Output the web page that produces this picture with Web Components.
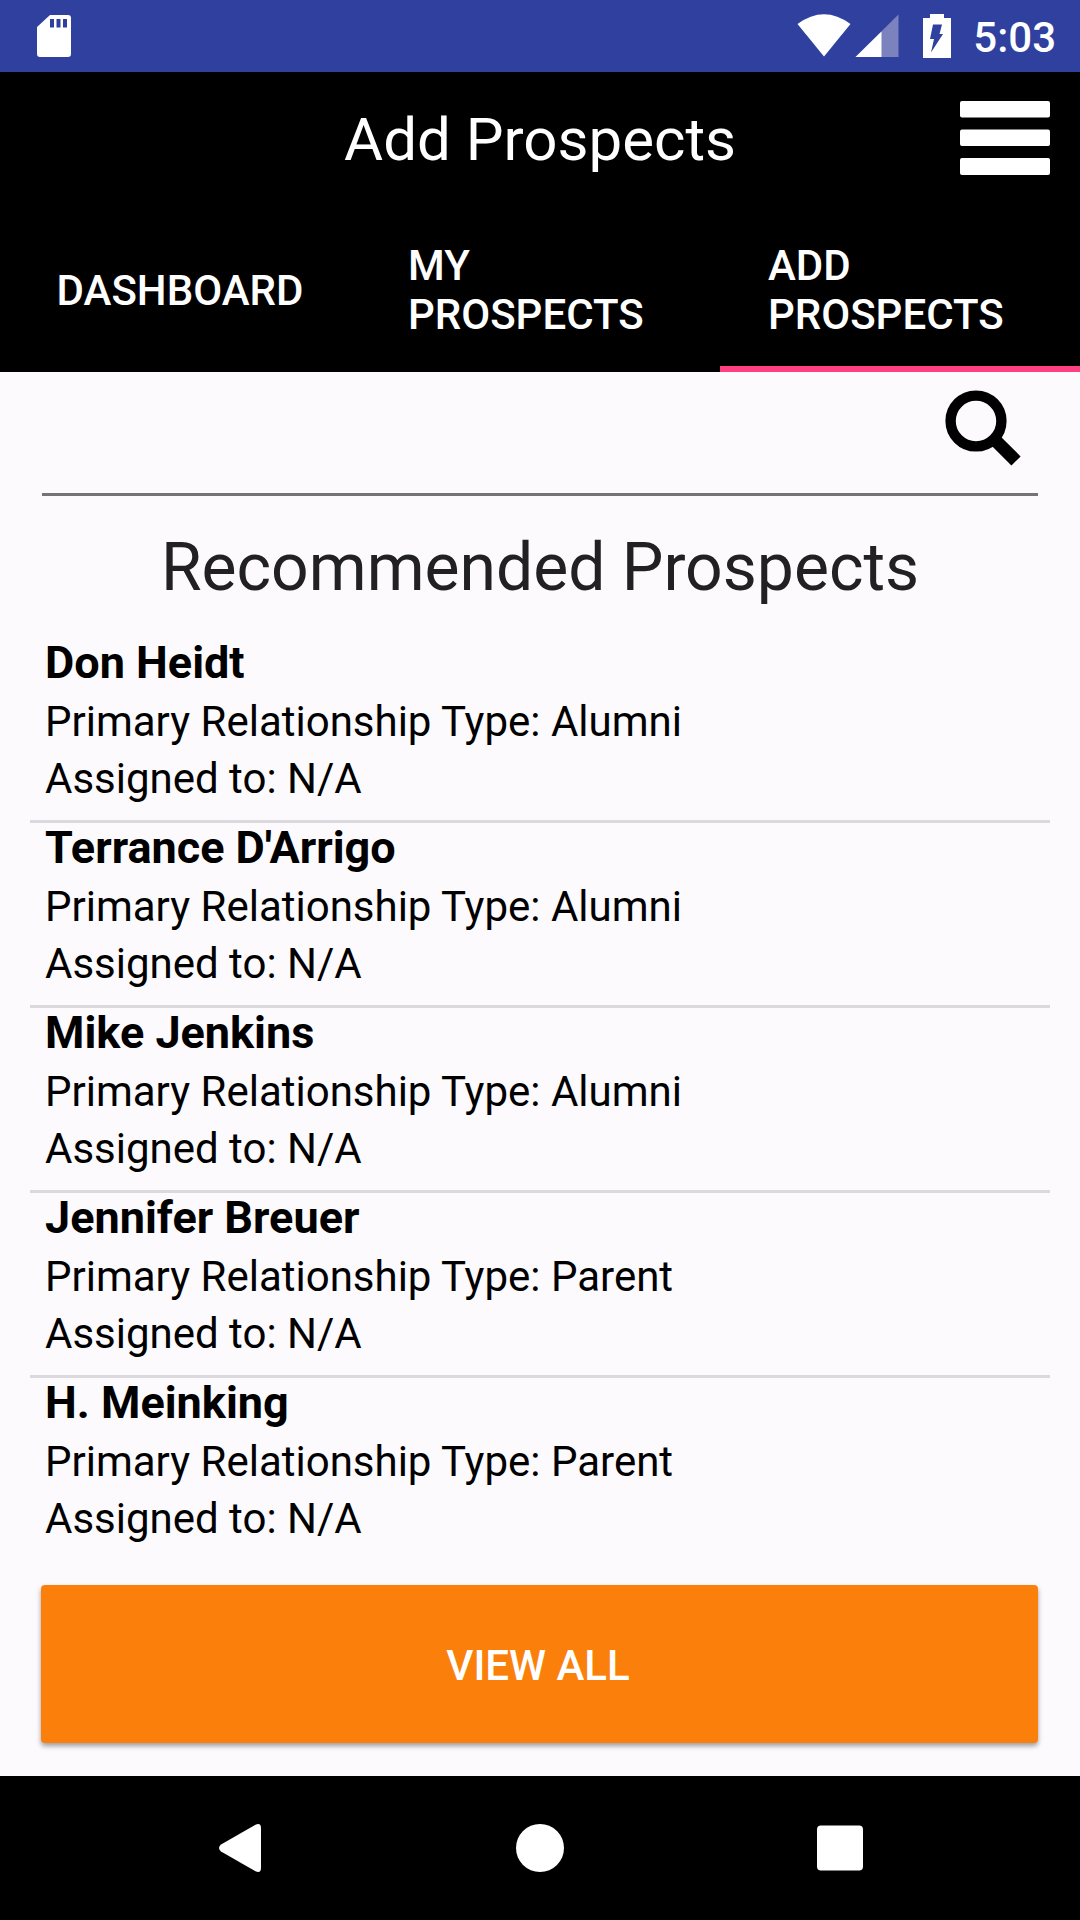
<!DOCTYPE html>
<html lang="en">
<head>
<meta charset="utf-8">
<meta name="viewport" content="width=device-width, initial-scale=1">
<title>Add Prospects</title>
<style>
  body { margin: 0; background: #fcfafd; color: #000; font-family: Roboto, "Noto Sans", sans-serif; }
</style>
</head>
<body>
<prospects-app></prospects-app>

<template id="status-bar">
  <style>
    :host { display: flex; align-items: center; height: 72px; padding: 0 24px 0 36px; background: #2f409f; color: #fff; font-size: 42px; font-weight: 500; line-height: 48px; }
    svg { display: block; flex: none; }
    .spacer { flex: 1; }
    .battery { margin: 0 22px; }
    time { padding-top: 3px; }
  </style>
  <svg width="36" height="44" viewBox="0 0 36 44" role="img" aria-label="SD card"><path fill="#fff" fill-rule="evenodd" d="M14 1H32Q35 1 35 4V40Q35 43 32 43H4Q1 43 1 40V13ZM14 5V13.500H18V5ZM20.500 5V13.500H24.500V5ZM27 5V13.500H31V5Z"/></svg>
  <span class="spacer"></span>
  <svg width="104" height="44" viewBox="0 0 104 44" role="img" aria-label="Wi-Fi and mobile signal"><path fill="#fff" d="M0.500 10Q27 -9.500 53.500 10L27 42.500Z"/><path fill="#7c82bd" d="M58.500 43L101.500 0.500V43Z"/><path fill="#fff" d="M58.500 43L84.500 17.500V43Z"/></svg>
  <svg class="battery" width="28" height="44" viewBox="0 0 28 44" role="img" aria-label="Battery charging"><path fill="#fff" d="M0 4H7V0H21V4H28V44H0Z"/><path fill="#2f409f" d="M10 10.500H19L16.500 20H20L8 38.500L11 25H7Z"/></svg>
  <time>5:03</time>
</template>

<template id="app-header">
  <style>
    :host { display: block; background: #000; color: #fff; }
    .bar { display: grid; grid-template-columns: 1fr auto 1fr; align-items: center; height: 136px; padding: 0 30px; }
    h1 { grid-column: 2; margin: 0; font-size: 60px; font-weight: 400; line-height: 70px; }
    button { justify-self: end; padding: 0 0 4px; border: 0; background: none; }
    svg { display: block; }
    nav { display: flex; height: 164px; }
  </style>
  <div class="bar">
    <h1><slot name="title"></slot></h1>
    <button type="button" aria-label="Open menu"><svg width="90" height="76" viewBox="0 0 90 76" fill="#fff"><rect y="1" width="90" height="16.500" rx="2"/><rect y="29.500" width="90" height="16.500" rx="2"/><rect y="58" width="90" height="17" rx="2"/></svg></button>
  </div>
  <nav><slot></slot></nav>
</template>

<template id="nav-tab">
  <style>
    :host { display: flex; flex: 1 1 0; min-width: 0; }
    a { box-sizing: border-box; flex: 1; display: flex; align-items: center; justify-content: center; padding: 6px 48px 0; border-bottom: 6px solid transparent; color: #fff; text-decoration: none; font-size: 42px; font-weight: 500; line-height: 49px; }
    :host([current]) a { border-color: #ff4081; }
  </style>
  <a href="#"><span><slot></slot></span></a>
</template>

<template id="search-field">
  <style>
    :host { display: block; }
    form { display: flex; align-items: center; height: 121px; margin: 0 42px; padding-right: 17px; border-bottom: 3px solid #747376; }
    input { flex: 1; min-width: 0; height: 96px; padding: 0 12px; border: 0; outline: 0; background: none; color: #212023; font: 400 54px/64px Roboto, sans-serif; }
    button { padding: 0 0 10px; border: 0; background: none; }
    svg { display: block; }
  </style>
  <form>
    <input type="text" aria-label="Search prospects">
    <button type="submit" aria-label="Search"><svg width="76" height="76" viewBox="0 0 76 76" fill="none" stroke="#000"><circle cx="31" cy="31" r="25.400" stroke-width="10.400"/><path d="M49 49L71 71" stroke-width="13"/></svg></button>
  </form>
</template>

<template id="prospect-item">
  <style>
    :host { display: block; padding: 0 15px 13px; border-bottom: 3px solid #dbd9dd; font-size: 42px; line-height: 57px; }
    :host(:last-of-type) { border-bottom: 0; }
    h3 { margin: 0 0 5px; font-size: 45px; font-weight: 700; line-height: 50px; }
    p { margin: 0; }
  </style>
  <h3><slot name="name"></slot></h3>
  <p>Primary Relationship Type: <slot name="type"></slot></p>
  <p>Assigned to: <slot name="assignee">N/A</slot></p>
</template>

<template id="prospect-list">
  <style>
    :host { display: block; }
    h2 { margin: 33px 0 32px; text-align: center; color: #212023; font-size: 66px; font-weight: 400; line-height: 77px; }
    .items { margin: 0 30px; }
  </style>
  <h2><slot name="heading"></slot></h2>
  <div class="items" role="list"><slot></slot></div>
</template>

<template id="raised-button">
  <style>
    :host { display: flex; }
    button { flex: 1; height: 158px; padding: 2px 3px 0 0; border: 0; border-radius: 4px; background: #fb800b; color: #fff; box-shadow: 0 3px 5px rgba(0,0,0,.38); font: 500 42px/49px Roboto, sans-serif; }
  </style>
  <button type="button"><slot></slot></button>
</template>

<template id="system-nav">
  <style>
    :host { display: flex; justify-content: center; gap: 252px; align-items: center; height: 144px; background: #000; }
    button { padding: 0; border: 0; background: none; }
    svg { display: block; }
  </style>
  <button type="button" aria-label="Back"><svg width="48" height="48" viewBox="0 0 48 48" fill="#fff"><path d="M5 20.500L39.500 0.700Q45 -1.500 45 4V44Q45 49.500 39.500 47.300L5 27.500Q1 24 5 20.500Z"/></svg></button>
  <button type="button" aria-label="Home"><svg width="48" height="48" viewBox="0 0 48 48" fill="#fff"><circle cx="24" cy="24" r="24"/></svg></button>
  <button type="button" aria-label="Recent apps"><svg width="48" height="48" viewBox="0 0 48 48" fill="#fff"><rect x="1" y="1.500" width="46" height="45" rx="4"/></svg></button>
</template>

<template id="prospects-app">
  <style>
    :host { display: flex; flex-direction: column; min-height: 100vh; }
    main { flex: 1; }
    raised-button { margin: 25px 42px 33px 41px; }
  </style>
  <status-bar></status-bar>
  <app-header>
    <span slot="title">Add Prospects</span>
    <nav-tab>DASHBOARD</nav-tab>
    <nav-tab>MY PROSPECTS</nav-tab>
    <nav-tab current>ADD PROSPECTS</nav-tab>
  </app-header>
  <main>
    <search-field></search-field>
    <prospect-list>
      <span slot="heading">Recommended Prospects</span>
      <prospect-item role="listitem"><span slot="name">Don Heidt</span><span slot="type">Alumni</span></prospect-item>
      <prospect-item role="listitem"><span slot="name">Terrance D'Arrigo</span><span slot="type">Alumni</span></prospect-item>
      <prospect-item role="listitem"><span slot="name">Mike Jenkins</span><span slot="type">Alumni</span></prospect-item>
      <prospect-item role="listitem"><span slot="name">Jennifer Breuer</span><span slot="type">Parent</span></prospect-item>
      <prospect-item role="listitem"><span slot="name">H. Meinking</span><span slot="type">Parent</span></prospect-item>
    </prospect-list>
    <raised-button>VIEW ALL</raised-button>
  </main>
  <system-nav></system-nav>
</template>

<script>
  class TemplateElement extends HTMLElement {
    constructor() {
      super();
      const template = document.getElementById(this.localName);
      this.attachShadow({ mode: "open" }).append(template.content.cloneNode(true));
    }
  }

  class NavTab extends TemplateElement {
    connectedCallback() {
      if (this.hasAttribute("current")) {
        this.shadowRoot.querySelector("a").setAttribute("aria-current", "page");
      }
    }
  }

  class SearchField extends TemplateElement {
    connectedCallback() {
      this.shadowRoot.querySelector("form").addEventListener("submit", (event) => event.preventDefault());
    }
  }

  customElements.define("status-bar", class extends TemplateElement {});
  customElements.define("app-header", class extends TemplateElement {});
  customElements.define("nav-tab", NavTab);
  customElements.define("search-field", SearchField);
  customElements.define("prospect-item", class extends TemplateElement {});
  customElements.define("prospect-list", class extends TemplateElement {});
  customElements.define("raised-button", class extends TemplateElement {});
  customElements.define("system-nav", class extends TemplateElement {});
  customElements.define("prospects-app", class extends TemplateElement {});
</script>
</body>
</html>
